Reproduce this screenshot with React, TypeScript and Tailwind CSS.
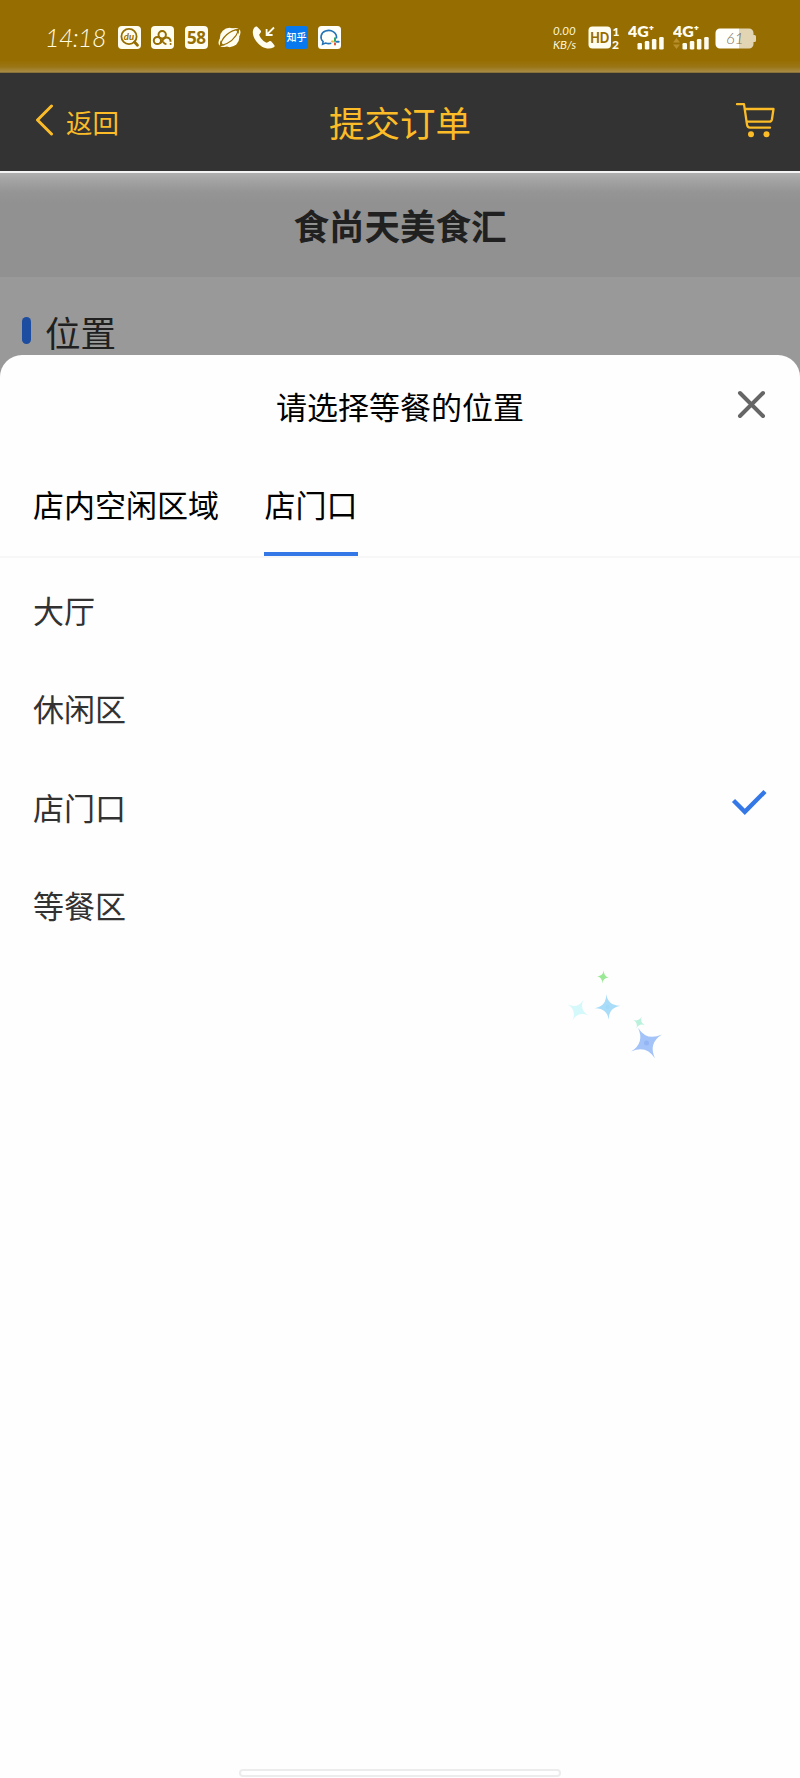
import React, { useState } from 'react';

const positions = ['大厅', '休闲区', '店门口', '等餐区'];

const SignalBars: React.FC<{ arrows?: boolean }> = ({ arrows = false }) => (
  <svg className="w-[37px] h-[25px]" viewBox="0 0 37 25">
    <text
      x="0"
      y="12"
      fill="#fffdf0"
      fontSize="14.5"
      fontWeight="800"
      fontFamily="Lato, sans-serif"
      textLength="26"
      lengthAdjust="spacingAndGlyphs"
    >
      4G⁺
    </text>
    {arrows && (
      <g fill="#b98f2c">
        <path d="M0 17.5 3.5 13 7 17.5Z" />
        <path d="M0 19.5 3.5 24 7 19.5Z" />
      </g>
    )}
    <g fill="#fffdf0">
      <rect x="9.5" y="18" width="4.5" height="6.5" rx="1.3" />
      <rect x="16.8" y="16" width="4.5" height="8.5" rx="1.3" />
      <rect x="23.9" y="14" width="4.5" height="10.5" rx="1.3" />
      <rect x="31.2" y="12" width="4.5" height="12.5" rx="1.3" />
    </g>
  </svg>
);

const NotificationIcons = () => (
  <div className="flex items-center gap-[10.4px]">
    {/* Search */}
    <svg className="w-[23px] h-[23px]" viewBox="0 0 23 23">
      <rect width="23" height="23" rx="4" fill="#fffdf0" />
      <g fill="none" stroke="#966d00" strokeWidth="1.8">
        <circle cx="11" cy="10.5" r="7.6" />
        <path d="m16.5 16 3 3.2" strokeWidth="2.8" strokeLinecap="round" />
      </g>
      <text
        x="5.8"
        y="14"
        fill="#966d00"
        fontSize="9.5"
        fontWeight="700"
        fontStyle="italic"
        fontFamily="Lato, sans-serif"
      >
        du
      </text>
    </svg>
    {/* Cloud drive */}
    <svg className="w-[23px] h-[23px]" viewBox="0 0 23 23">
      <rect width="23" height="23" rx="4" fill="#fffdf0" />
      <g fill="none" stroke="#966d00" strokeWidth="2">
        <circle cx="11.2" cy="8.7" r="3.7" />
        <circle cx="6.4" cy="14.5" r="3.6" />
        <path d="M9 17.4c2-1.2 3-6 6.3-6 2.4 0 4.3 1.7 4.3 4.3M12 15.5c.6 1.5 1.6 2.5 3.4 2.5" />
      </g>
      <circle cx="19.6" cy="18" r="1" fill="#966d00" />
    </svg>
    <div className="w-[23px] h-[23px] rounded-[4px] bg-[#fffdf0] text-[#966d00] text-[17px] leading-[23px] font-bold text-center tracking-[-0.5px] font-['Noto_Sans']">
      58
    </div>
    {/* Planet */}
    <svg className="w-[23px] h-[23px]" viewBox="0 0 23 23">
      <circle cx="11.6" cy="11.5" r="9.7" fill="#fffdf0" />
      <ellipse
        cx="11.5"
        cy="11.5"
        rx="12"
        ry="6"
        transform="rotate(-38 11.5 11.5)"
        fill="none"
        stroke="#fffdf0"
        strokeWidth="1.6"
      />
      <path d="M2 20C4 11 12 4 21 3.4 18 12 11 18 2 20Z" fill="none" stroke="#966d00" strokeWidth="1.2" />
    </svg>
    {/* Incoming call */}
    <svg className="w-[23px] h-[23px]" viewBox="0 0 23 23">
      <path
        d="M2.7 1.2C-.2 4.2.2 9.8 4.2 15.2c4.6 6.2 11.7 9.3 17.6 6.1 1-.6 1-1.5.4-2.3l-2.6-3.2c-.7-.8-1.6-1-2.5-.4l-2.3 1.4C11.5 15.6 8.3 12 7.1 8.7l1.6-2.1c.6-.8.4-1.6-.2-2.4L5.4.9c-.9-.8-1.9-.6-2.7.3Z"
        fill="#fffdf0"
      />
      <path d="m22 1.5-6.5 6.5M14.6 3v6h6" fill="none" stroke="#fffdf0" strokeWidth="1.8" />
    </svg>
    <div className="w-[23px] h-[23px] rounded-[3px] bg-[#0878ee] text-white text-[10px] leading-[22px] font-medium text-center whitespace-nowrap">
      知乎
    </div>
    {/* Work chat */}
    <svg className="w-[23px] h-[23px]" viewBox="0 0 23 23">
      <rect width="23" height="23" rx="3.5" fill="#fffef8" />
      <path
        d="M13.3 17.2c-2 .6-3.8.5-5.7-.2l-3 1.2.5-2.7C1.5 12.5 2.7 6.7 7.5 5c5.8-2.1 12 1.8 10.8 7.5"
        fill="none"
        stroke="#2474b8"
        strokeWidth="1.6"
      />
      <path d="M17 12.3v2.6" stroke="#32a55e" strokeWidth="2" strokeLinecap="round" />
      <path d="M18.7 15.8h2" stroke="#2474b8" strokeWidth="2" strokeLinecap="round" />
      <path d="M17 17.2v1.3" stroke="#e55238" strokeWidth="2" strokeLinecap="round" />
      <path d="M14 15.5h1" stroke="#f2b63b" strokeWidth="2" strokeLinecap="round" />
    </svg>
  </div>
);

const StatusBar = () => (
  <div className="h-[73px] pl-[45px] pr-[44px] pb-[-2px] pt-[2px] flex items-center bg-[linear-gradient(to_bottom,#966d00_0px,#966d00_60px,#9b7617_67px,#a88b45_72px,#6b5730_73px)]">
    <span className="w-[73px] text-[25px] leading-none font-light italic text-[#fffbe0] tracking-[-0.6px] font-['Lato']">
      14:18
    </span>
    <NotificationIcons />
    <div className="ml-auto flex items-center">
      <div className="w-[35px] text-[11.5px] leading-[14px] italic text-[#fff8d8] font-['Lato']">
        <div>0.00</div>
        <div>KB/s</div>
      </div>
      <svg className="w-[32px] h-[23px] mr-[8px]" viewBox="0 0 32 23">
        <rect x="0.5" y="0.5" width="22.5" height="22" rx="4" fill="#fffdf0" />
        <g fontFamily="Lato, sans-serif" fontWeight="900">
          <text x="2.2" y="16.8" fill="#966d00" fontSize="14.5" textLength="19" lengthAdjust="spacingAndGlyphs">
            HD
          </text>
          <text x="24.5" y="9.5" fill="#fffdf0" fontSize="12">1</text>
          <text x="24" y="22.5" fill="#fffdf0" fontSize="12">2</text>
        </g>
      </svg>
      <SignalBars />
      <div className="w-[8px]" />
      <SignalBars arrows />
      <svg className="w-[41px] h-[21px] ml-[5px] mt-[2px]" viewBox="0 0 41 21">
        <path d="M24 0.5h10a4.5 4.5 0 0 1 4.5 4.5v2h1a1.5 1.5 0 0 1 1.5 1.5v4a1.5 1.5 0 0 1-1.5 1.5h-1v2a4.5 4.5 0 0 1-4.5 4.5H24Z" fill="#e1d5b3" />
        <path d="M24 0.5H5A4.5 4.5 0 0 0 .5 5v11A4.5 4.5 0 0 0 5 20.5h19Z" fill="#fffffc" />
        <text x="11" y="16" fill="#7d7667" fontSize="16" fontStyle="italic" fontWeight="300" fontFamily="Lato, sans-serif">
          61
        </text>
      </svg>
    </div>
  </div>
);

const NavBar = () => (
  <div className="h-[98px] px-[25px] grid grid-cols-3 items-center bg-[#333333] text-[#fbbc27]">
    <button className="flex items-center gap-[12px] pl-[10px]">
      <svg className="w-[19px] h-[32px] -mt-[4px]" viewBox="0 0 19 32" fill="none" stroke="currentColor" strokeWidth="3" strokeLinecap="round" strokeLinejoin="round">
        <path d="M16.5 2 2.5 16l14 14" />
      </svg>
      <span className="text-[26.5px] leading-none">返回</span>
    </button>
    <h1 className="text-[35.5px] leading-none text-center whitespace-nowrap">提交订单</h1>
    <svg className="w-[40px] h-[36px] justify-self-end -mt-[4px]" viewBox="0 0 40 36" fill="none" stroke="currentColor" strokeWidth="2.3" strokeLinecap="round" strokeLinejoin="round">
      <path d="M2 2.2h7l3 20.5c.3 2 1.2 3 3 3h20" />
      <path d="M10 7h28.5l-1.6 10.5c-.3 1.6-1.2 2.2-2.6 2.2H12" />
      <circle cx="16" cy="32.2" r="3" fill="currentColor" stroke="none" />
      <circle cx="31.5" cy="32.2" r="3" fill="currentColor" stroke="none" />
    </svg>
  </div>
);

// Decorative sparkles floating over the sheet
const Sparkles = () => (
  <svg className="absolute left-[560px] top-[605px] w-[110px] h-[110px] pointer-events-none" viewBox="0 0 110 110">
    <defs>
      <path id="star" d="M0-13Q.8-.8 13 0 .8.8 0 13-.8.8-13 0-.8-.8 0-13Z" />
      <filter id="glow" x="-50%" y="-50%" width="200%" height="200%">
        <feGaussianBlur stdDeviation="0.6" />
      </filter>
    </defs>
    <g filter="url(#glow)">
      <use href="#star" transform="translate(43 17) rotate(8) scale(.5)" fill="#9be896" />
      <use href="#star" transform="translate(18 50) rotate(28) scale(.9)" fill="#d5f8fa" />
      <use href="#star" transform="translate(47.5 47) rotate(-6)" fill="#a9dcf8" />
      <use href="#star" transform="translate(79 62.5) rotate(25) scale(.5)" fill="#b9f1dc" />
      <use href="#star" transform="translate(86.5 83) rotate(-29) scale(1.35)" fill="#a4c3f8" />
      <circle cx="86.5" cy="83" r="2.5" fill="#94b5f5" />
      <circle cx="47.5" cy="47" r="2" fill="#a1d9f8" />
    </g>
  </svg>
);

const PositionSheet = () => {
  const [selected, setSelected] = useState('店门口');

  return (
    <div className="relative h-[1423px] bg-[#fefefe] rounded-t-[22px] flex flex-col">
      <div className="h-[100px] px-[34px] grid grid-cols-[1fr_auto_1fr] items-center text-black">
        <h2 className="col-start-2 text-[31px] leading-none whitespace-nowrap">请选择等餐的位置</h2>
        <button className="justify-self-end">
          <svg className="w-[30px] h-[30px] -mt-[2px]" viewBox="0 0 30 30" stroke="#666666" strokeWidth="4" strokeLinecap="round">
            <path d="m4 4 23 23M27 4 4 27" />
          </svg>
        </button>
      </div>

      {/* Tabs */}
      <div className="h-[103px] px-[33px] flex gap-[45px] border-b-[2px] border-[#f7f7f7] text-[31px] leading-none text-black">
        <button className="h-[101px] pb-[5px]">店内空闲区域</button>
        <button className="h-[101px] w-[94px] border-b-[4px] border-[#3478e8]">店门口</button>
      </div>

      {/* Options */}
      <ul className="text-[31px] leading-none text-[#323233]">
        {positions.map((position) => (
          <li
            key={position}
            onClick={() => setSelected(position)}
            className="h-[98.5px] pl-[33px] pr-[33px] pt-[4px] flex items-center justify-between cursor-pointer"
          >
            <span>{position}</span>
            {selected === position && (
              <svg className="w-[36px] h-[28px] -mt-[9px]" viewBox="0 0 36 28" fill="none" stroke="#3478e8" strokeWidth="4.4">
                <path d="M2.5 12.5 13.8 23.8 34 3.5" />
              </svg>
            )}
          </li>
        ))}
      </ul>

      <Sparkles />

      {/* Gesture bar */}
      <div className="mt-auto mb-[1px] mx-auto w-[322px] h-[8px] rounded-full border-2 border-[#ececec] bg-white" />
    </div>
  );
};

export default function App() {
  return (
    <div className="w-[800px] h-[1778px] overflow-hidden bg-[#999999] font-['Noto_Sans_CJK_SC',sans-serif]">
      <StatusBar />
      <NavBar />
      <div className="h-[106px] pb-[1px] border-t-[2px] border-[#f4f4f4] flex items-center justify-center bg-[linear-gradient(to_bottom,#b0b0b0_0px,#a2a2a2_8px,#959595_19px,#919191_30px)]">
        <h2 className="text-[35.5px] leading-none font-bold text-[#202020]">食尚天美食汇</h2>
      </div>
      <div className="h-[78px] pl-[22px] pt-[37px] flex items-start bg-[#999999]">
        <span className="mt-[3px] w-[9px] h-[27px] rounded-full bg-[#1c4da0]" />
        <span className="ml-[14px] text-[35.5px] leading-none text-[#202020]">位置</span>
      </div>
      <PositionSheet />
    </div>
  );
}
